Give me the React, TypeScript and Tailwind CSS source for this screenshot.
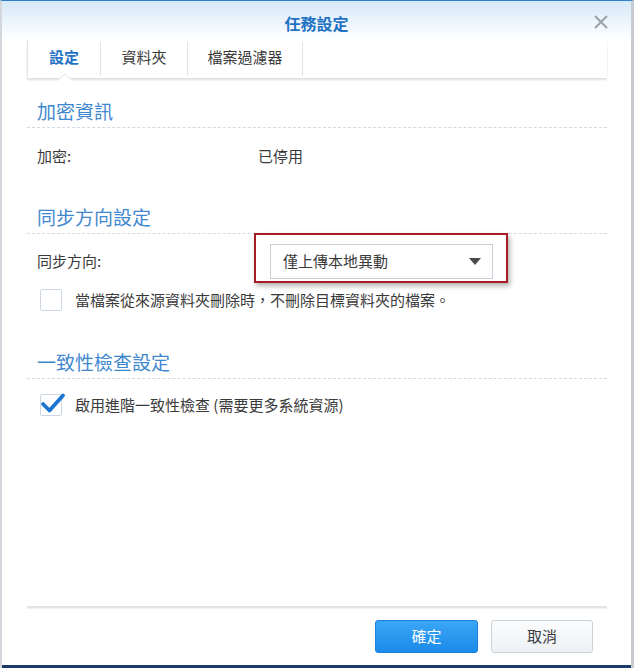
import React from "react";

const font = { fontFamily: '"Noto Sans CJK TC", "Noto Sans", sans-serif' };

function Checkbox({ checked }: { checked?: boolean }) {
    return (
        <span className="relative w-[22px] h-[22px] shrink-0 rounded-[2px] border border-[#cdd6e0] bg-white">
            {checked && (
                <svg className="absolute -left-[1px] -top-[4px]" width="26" height="25" viewBox="0 0 26 25">
                    <path d="M3 13 L9.5 19.5 L23 4.5" fill="none" stroke="#1b74d0" strokeWidth="3.8" strokeLinecap="round" strokeLinejoin="round" />
                </svg>
            )}
        </span>
    );
}

function SectionTitle({ children }: { children: React.ReactNode }) {
    return (
        <div className="mx-[25px] mr-[24px] border-b border-dashed border-[#d4dae0] pb-[4px] pl-[10px]">
            <h2 className="text-[19px] leading-[24px] text-[#3f88cf]">{children}</h2>
        </div>
    );
}

export default function App() {
    return (
        <div
            style={font}
            className="w-[634px] h-[668px] bg-white flex flex-col border-t border-[#2f80cf] border-l-2 border-l-[#d3d6da] border-r-[3px] border-r-[#c8ccd1] text-[#3a3a3a]"
        >
            {/* Header */}
            <header className="relative h-[39px] shrink-0 bg-gradient-to-b from-[#d6e8f8] to-white flex items-center justify-center">
                <h1 className="text-[16px] font-bold text-[#1f72c4] mt-[4px]">任務設定</h1>
                <button className="absolute right-[22px] top-[13px]">
                    <svg width="16" height="16" viewBox="0 0 16 16">
                        <path d="M2 2 L14 14 M14 2 L2 14" stroke="#9ba1a8" strokeWidth="2" />
                    </svg>
                </button>
            </header>

            {/* Tabs */}
            <nav className="mx-[25px] mr-[24px] h-[38px] shrink-0 flex items-stretch bg-white shadow-[0_2px_2px_rgba(0,0,0,0.13)] relative">
                <div className="relative w-[73px] flex items-center justify-center border-l border-[#e3e7eb] pb-[3px]">
                    <span className="text-[15px] font-bold text-[#1f72c4]">設定</span>
                    <svg className="absolute left-[29px] -bottom-[3px]" width="16" height="8" viewBox="0 0 16 8">
                        <path d="M0 8 L8 1 L16 8 Z" fill="#ffffff" />
                        <path d="M0 7.5 L8 1 L16 7.5" fill="none" stroke="#e2e5e8" strokeWidth="1" />
                    </svg>
                </div>
                <div className="w-[87px] flex items-center justify-center border-l border-[#dfe4e8] my-[2px] pb-[3px]">
                    <span className="text-[15px] text-[#3a3a3a]">資料夾</span>
                </div>
                <div className="w-[116px] flex items-center justify-center border-l border-r border-[#dfe4e8] my-[2px] pb-[3px]">
                    <span className="text-[15px] text-[#3a3a3a]">檔案過濾器</span>
                </div>
            </nav>

            {/* Section: 加密資訊 */}
            <div className="mt-[21px]">
                <SectionTitle>加密資訊</SectionTitle>
            </div>
            <div className="mt-[18px] ml-[35px] h-[20px] flex items-center text-[15px]">
                <span className="w-[221px]">加密:</span>
                <span>已停用</span>
            </div>

            {/* Section: 同步方向設定 */}
            <div className="mt-[39px]">
                <SectionTitle>同步方向設定</SectionTitle>
            </div>
            <div className="mt-[10px] ml-[35px] flex items-center text-[15px]">
                <span className="w-[233px]">同步方向:</span>
                <div className="relative">
                    <div className="w-[223px] h-[35px] border border-[#c8d0d9] bg-white flex items-center justify-between pl-[12px] pr-[11px]">
                        <span className="text-[15px] text-[#3a3a3a]">僅上傳本地異動</span>
                        <svg width="12" height="7" viewBox="0 0 12 7">
                            <path d="M0 0 L12 0 L6 7 Z" fill="#4a4a4a" />
                        </svg>
                    </div>
                    <div className="absolute -left-[16px] -top-[11px] w-[254px] h-[50px] border-2 border-[#a51d24] shadow-[2px_3px_5px_rgba(0,0,0,0.3)] pointer-events-none" />
                </div>
            </div>
            <div className="mt-[10px] ml-[38px] flex items-center gap-[13px] text-[15px]">
                <Checkbox />
                <span>當檔案從來源資料夾刪除時，不刪除目標資料夾的檔案。</span>
            </div>

            {/* Section: 一致性檢查設定 */}
            <div className="mt-[38px]">
                <SectionTitle>一致性檢查設定</SectionTitle>
            </div>
            <div className="mt-[15px] ml-[38px] flex items-center gap-[13px] text-[15px]">
                <Checkbox checked />
                <span>啟用進階一致性檢查 (需要更多系統資源)</span>
            </div>

            <div className="flex-1" />

            {/* Footer */}
            <div className="mx-[25px] mr-[24px] h-[2px] bg-[#e4e4e4] shadow-[0_1px_1px_rgba(0,0,0,0.06)]" />
            <div className="h-[57px] shrink-0 flex items-start justify-end gap-[13px] pr-[38px] pt-[12px]">
                <button className="w-[103px] h-[33px] rounded-[3px] border border-[#1c7fd8] bg-gradient-to-b from-[#3aa6f6] to-[#1a8be9] text-white text-[15px]">
                    確定
                </button>
                <button className="w-[102px] h-[33px] rounded-[3px] border border-[#c9d0d8] bg-gradient-to-b from-[#fbfcfd] to-[#edf1f5] text-[#3a3a3a] text-[15px]">
                    取消
                </button>
            </div>
            <div className="h-[3px] shrink-0 bg-[#1d3b69]" />
        </div>
    );
}
